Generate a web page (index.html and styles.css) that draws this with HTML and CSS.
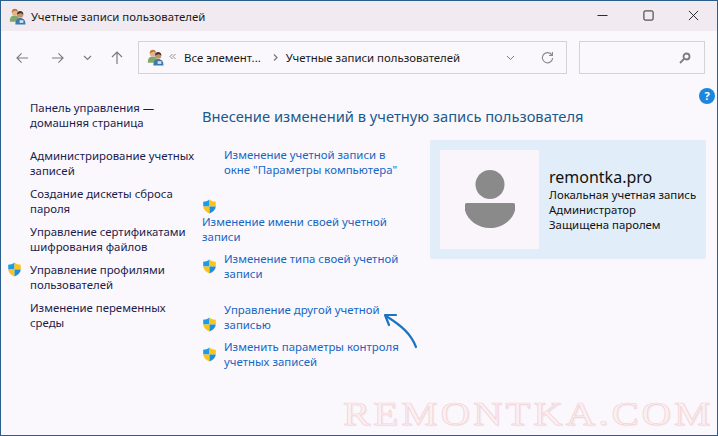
FILE: index.html
```html
<!DOCTYPE html>
<html lang="ru">
<head>
<meta charset="utf-8">
<title>Учетные записи пользователей</title>
<link rel="stylesheet" href="styles.css">
</head>
<body>
<svg class="defs" width="0" height="0" aria-hidden="true">
  <defs>
    <symbol id="shield" viewBox="0 0 15 16">
      <path d="M7.5 .5C5.500 2 3.200 2.800.8 3v5h6.700V.5z" fill="#1c9be6"/>
      <path d="M7.500.5C9.500 2 11.800 2.800 14.200 3v5H7.500V.5z" fill="#fcc419"/>
      <path d="M.8 8c.3 3.600 3 6 6.700 7.500V8H.8z" fill="#fcc419"/>
      <path d="M14.200 8c-.3 3.600-3 6-6.700 7.500V8h6.700z" fill="#1c8fdc"/>
    </symbol>
    <symbol id="users" viewBox="0 0 16 16">
      <path d="M.8 12c0-3.500 1.700-5 4.700-5s4 1.500 4 5v1H.8z" fill="#7fa86b"/>
      <circle cx="5.500" cy="4" r="3" fill="#e0b48c"/>
      <path d="M2.600 4C2.600 1.500 4.300.6 5.500.6S8.300 1.500 8.300 3.500L6 2.300z" fill="#c0703a"/>
      <path d="M6 15.500c0-4 1.500-6 4.500-6s5 2 5 6z" fill="#3f78ad"/>
      <circle cx="10.500" cy="6.200" r="3" fill="#c98f68"/>
      <path d="M7.600 6C7.600 3.500 9.300 2.800 10.500 2.800s3 .7 3 3.200L11 4.600z" fill="#3a3230"/>
      <rect x="10" y="11.500" width="3.500" height="2.500" fill="#cfe4f5"/>
    </symbol>
  </defs>
</svg>
<div class="window">
  <header class="titlebar">
    <svg class="app-icon"><use href="#users"/></svg>
    <span class="title">Учетные записи пользователей</span>
    <div class="controls">
      <svg class="ctl" viewBox="0 0 12 12"><path d="M.5 6h11" /></svg>
      <svg class="ctl" viewBox="0 0 12 12"><rect x="1" y="1" width="10" height="10" rx="1.200"/></svg>
      <svg class="ctl" viewBox="0 0 12 12"><path d="M1 1l10 10M11 1L1 11"/></svg>
    </div>
  </header>
  <nav class="toolbar">
    <div class="navs">
      <svg class="nav-arrow back" viewBox="0 0 14 12"><path d="M13 6H1M6 1L1 6l5 5"/></svg>
      <svg class="nav-arrow" viewBox="0 0 14 12"><path d="M1 6h12M8 1l5 5-5 5"/></svg>
      <svg class="nav-drop" viewBox="0 0 9 6"><path d="M1 1l3.500 3.500L8 1"/></svg>
      <svg class="nav-up" viewBox="0 0 12 13"><path d="M6 13V1M1 6l5-5 5 5"/></svg>
    </div>
    <div class="address">
      <svg class="addr-icon"><use href="#users"/></svg>
      <svg class="crumb-sep" viewBox="0 0 7 7"><path d="M3.500 1L1 3.500 3.500 6M6.500 1L4 3.500 6.500 6"/></svg>
      <span class="crumb">Все элемент...</span>
      <svg class="crumb-arrow" viewBox="0 0 5 7"><path d="M1 .5L4 3.500 1 6.500"/></svg>
      <span class="crumb">Учетные записи пользователей</span>
      <svg class="addr-drop" viewBox="0 0 9 6"><path d="M1 1l3.500 3.500L8 1"/></svg>
      <svg class="refresh" viewBox="0 0 14 14"><path d="M11.800 4.500A5.500 5.500 0 1 0 12.500 7.500M12.300 1v3.800H8.600"/></svg>
    </div>
    <div class="search">
      <svg class="search-icon" viewBox="0 0 12 12"><circle cx="7.500" cy="4.500" r="3" /><path d="M5.300 6.700L1 11"/></svg>
    </div>
  </nav>
  <div class="help">?</div>
  <main class="content">
    <aside class="side">
      <a class="side-link home">Панель управления —<br>домашняя страница</a>
      <a class="side-link">Администрирование учетных записей</a>
      <a class="side-link">Создание дискеты сброса пароля</a>
      <a class="side-link">Управление сертификатами шифрования файлов</a>
      <a class="side-link shielded"><svg class="shield"><use href="#shield"/></svg>Управление профилями пользователей</a>
      <a class="side-link">Изменение переменных среды</a>
    </aside>
    <section class="tasks">
      <h1>Внесение изменений в учетную запись пользователя</h1>
      <a class="task first">Изменение учетной записи в окне "Параметры компьютера"</a>
      <div class="task-stack">
        <svg class="shield"><use href="#shield"/></svg>
        <a class="stack-link">Изменение имени своей учетной записи</a>
      </div>
      <div class="task-row type">
        <svg class="shield"><use href="#shield"/></svg>
        <a>Изменение типа своей учетной записи</a>
      </div>
      <div class="task-row other">
        <svg class="shield"><use href="#shield"/></svg>
        <a>Управление другой учетной записью</a>
      </div>
      <div class="task-row uac">
        <svg class="shield"><use href="#shield"/></svg>
        <a>Изменить параметры контроля учетных записей</a>
      </div>
    </section>
    <section class="card">
      <div class="avatar">
        <svg viewBox="0 0 50 60" class="avatar-img">
          <circle cx="25" cy="14.500" r="14.500" fill="#8a8a8a"/>
          <path d="M2 33h46c1.500 0 2.500 1 2.500 3 0 12-12 22-25.500 22S-.5 48-.5 36c0-2 1-3 2.500-3z" fill="#8a8a8a"/>
        </svg>
      </div>
      <div class="card-text">
        <div class="user">remontka.pro</div>
        <div>Локальная учетная запись</div>
        <div>Администратор</div>
        <div>Защищена паролем</div>
      </div>
    </section>
  </main>
  <svg class="pointer" viewBox="378 308 44 44"><path d="M416 347C411 334 402 326 386 316" /><path d="M396 315L385 315 389 325"/></svg>
  <div class="watermark">REMONTKA.COM</div>
</div>
</body>
</html>
```

FILE: styles.css
```css
* { box-sizing: border-box; }
html, body { margin: 0; padding: 0; }
body { width: 718px; height: 436px; overflow: hidden; font-family: "Noto Sans", "Open Sans", sans-serif; font-size: 11.400px; line-height: 15px; }
.defs { position: absolute; }
.window { position: relative; width: 718px; height: 436px; background: #faf8fc; border: 1px solid #2a5f8c; display: flex; flex-direction: column; overflow: hidden; }
.titlebar { height: 30px; flex: none; background: #f1ebf1; display: flex; align-items: center; padding: 0 0 0 8px; }
.app-icon { width: 17px; height: 17px; margin-right: 5px; }
.title { color: #1a1a1a; }
.controls { margin-left: auto; display: flex; align-items: center; gap: 34.500px; padding-right: 18px; margin-top: -2px; }
.ctl { width: 11px; height: 11px; fill: none; stroke: #1a1a1a; stroke-width: 1; }
.toolbar { height: 33px; flex: none; margin-top: 10px; display: flex; align-items: stretch; }
.navs { width: 137px; flex: none; display: flex; align-items: center; padding-left: 15px; }
.navs svg { fill: none; stroke: #7b7b7b; stroke-width: 1.200; flex: none; }
.nav-arrow { width: 13px; height: 12px; margin-right: 19px; }
.back { margin-right: 22px; }
.nav-drop { width: 9px; height: 6px; margin-right: 19px; }
.nav-up { width: 12px; height: 13px; }
.address { width: 429px; flex: none; border: 1px solid #d3d3d5; display: flex; align-items: center; padding-left: 8px; }
.addr-icon { width: 17px; height: 17px; margin-right: 5px; flex: none; }
.crumb-sep { width: 7px; height: 7px; margin-right: 8px; margin-top: -3px; fill: none; stroke: #8a8a8a; stroke-width: 1; flex: none; }
.crumb { color: #1a1a1a; white-space: nowrap; }
.crumb-arrow { width: 5px; height: 7px; margin: 0 8px 0 12px; fill: none; stroke: #777; stroke-width: 1.200; flex: none; }
.addr-drop { width: 9px; height: 6px; margin-left: auto; margin-right: 26px; fill: none; stroke: #7b7b7b; flex: none; }
.refresh { width: 13px; height: 13px; margin-right: 12px; fill: none; stroke: #8a8a8a; stroke-width: 1.200; flex: none; }
.search { width: 126px; flex: none; margin-left: 12px; border: 1px solid #d3d3d5; display: flex; align-items: center; justify-content: flex-end; padding-right: 13px; }
.search-icon { width: 12px; height: 12px; fill: none; stroke: #7b7b7b; stroke-width: 1.800; }
.help { position: absolute; right: 2px; top: 87px; width: 16px; height: 16px; border-radius: 50%; background: #1b86dc; color: #fff; font-size: 11px; font-weight: 700; line-height: 16px; text-align: center; }
.content { flex: 1; display: grid; grid-template-columns: 201px 228px 276px; align-items: start; }
.side { padding: 26px 0 0 29px; display: flex; flex-direction: column; gap: 8px; }
.side-link { color: #1c1c4c; display: block; width: 168px; }
.home { margin-bottom: 10px; }
.shielded { position: relative; }
.shielded .shield { position: absolute; left: -23px; top: 0; }
.shield { width: 15px; height: 15px; flex: none; }
h1 { margin: 0 0 21px; font-size: 14.700px; font-weight: 400; line-height: 20px; color: #1a5a8c; white-space: nowrap; }
.tasks { padding-top: 32px; }
.task, .task-row a, .stack-link { color: #1666c4; display: block; width: 190px; }
.first { margin-left: 22px; width: 184px; }
.task-stack { margin-top: 22px; display: flex; flex-direction: column; }
.task-stack .shield { margin: 0 0 0 0; }
.task-row { display: flex; align-items: center; gap: 7px; }
.type { margin-top: 7px; }
.other { margin-top: 21px; align-items: flex-start; }
.other .shield { margin-top: 15px; }
.uac { margin-top: 7px; }
.task-row a { width: 180px; }
.card { margin-top: 66px; height: 119px; background: #e1edf9; border-radius: 2px; padding: 10px; display: flex; gap: 10px; }
.avatar { width: 99px; height: 99px; flex: none; background: #faf5fb; display: flex; align-items: center; justify-content: center; }
.avatar-img { width: 50px; height: 60px; }
.card-text { padding-top: 19px; color: #111; white-space: nowrap; }
.user { font-size: 16px; line-height: 17px; margin-bottom: 1px; }
.pointer { position: absolute; left: 377px; top: 307px; width: 44px; height: 44px; fill: none; stroke: #1b74c2; stroke-width: 2.200; stroke-linecap: round; stroke-linejoin: round; }
.watermark { position: absolute; left: 342px; top: 394px; font-family: "Liberation Serif", serif; font-size: 34px; line-height: 38px; letter-spacing: 2.500px; color: #fbf1f4; -webkit-text-stroke: .7px #f5d3d5; text-shadow: 1px 1px 1px #ebe6ea; white-space: nowrap; transform: scaleX(1.200); transform-origin: left center; }
```
